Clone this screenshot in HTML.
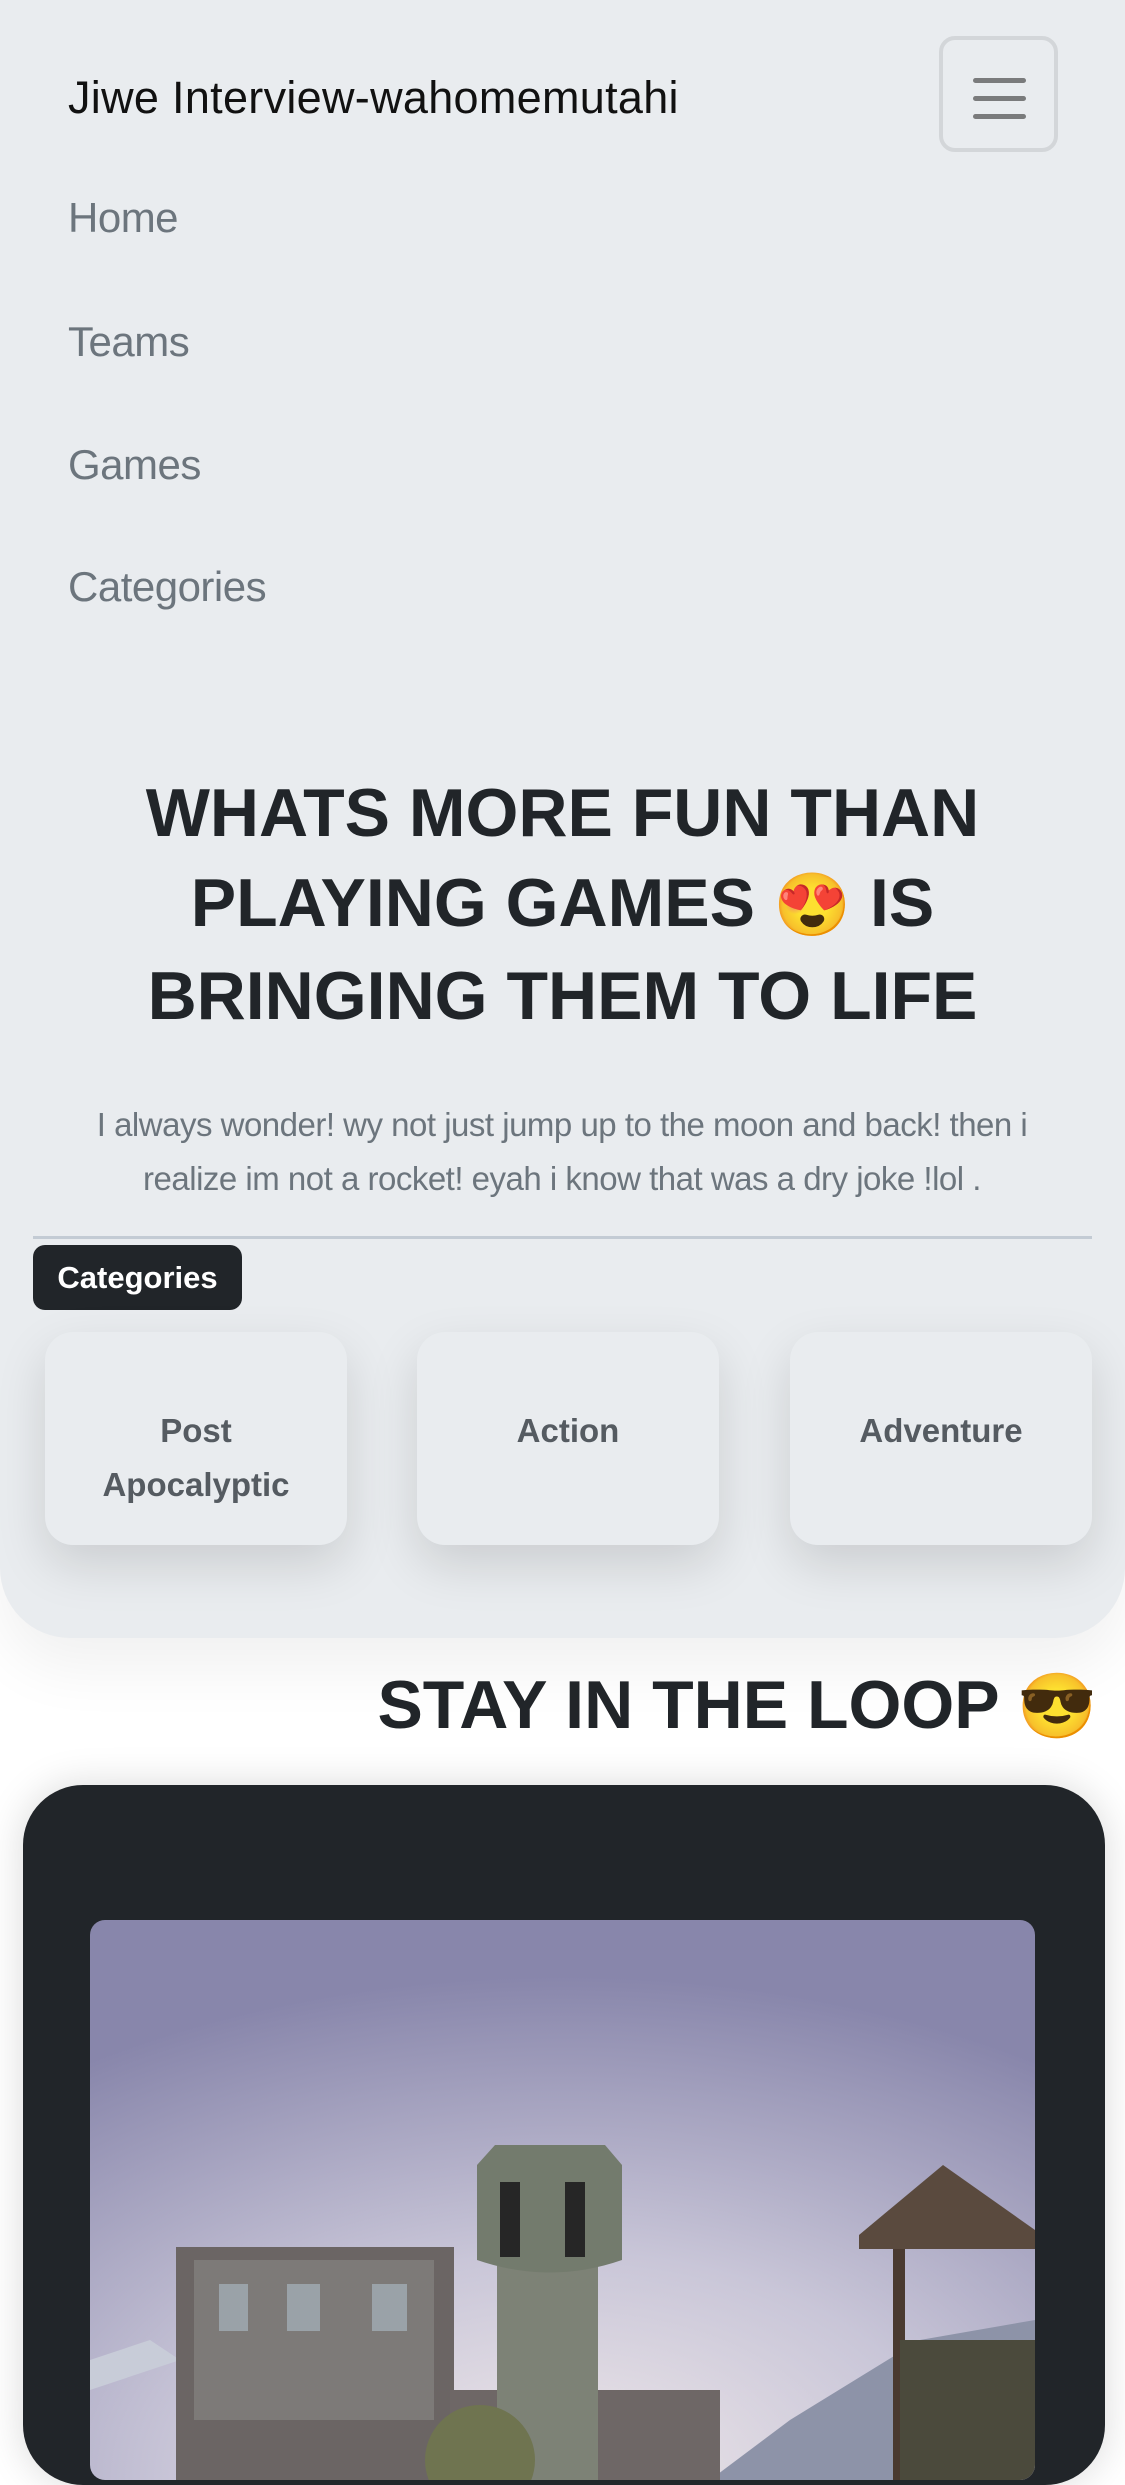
<!DOCTYPE html>
<html><head><meta charset="utf-8"><style>
*{margin:0;padding:0;box-sizing:border-box}
body{width:1125px;height:2436px;overflow:hidden;background:#fff;font-family:"Liberation Sans",sans-serif;position:relative}
.top{position:absolute;left:0;top:0;width:1125px;height:1638px;background:#e9ecef;border-radius:0 0 70px 70px;box-shadow:0 30px 60px rgba(0,0,0,0.06)}
.abs{position:absolute}
.brand{left:68px;top:72px;font-size:45px;color:#111;letter-spacing:0.3px}
.tog{left:939px;top:36px;width:119px;height:116px;border:4px solid #d3d6d9;border-radius:16px}
.tog i{position:absolute;left:30px;width:53px;height:5px;background:#7a7b7c;border-radius:3px}
.nav{left:68px;font-size:42px;color:#6c757d;font-weight:300;letter-spacing:-0.5px}
h1{position:absolute;left:0;width:1125px;top:768px;text-align:center;font-size:68px;line-height:90px;font-weight:700;color:#212529}
.p{left:62px;width:1000px;top:1098px;text-align:center;font-size:33px;line-height:54px;color:#6c757d;letter-spacing:-0.5px}
.hr{left:33px;top:1236px;width:1059px;height:3px;background:#c3cbd4}
.badge{left:33px;top:1245px;width:209px;height:65px;background:#212529;border-radius:12px;color:#fff;font-weight:700;font-size:31px;line-height:65px;text-align:center}
.card{top:1332px;width:302px;height:213px;background:#e9ecef;border-radius:28px;box-shadow:0 20px 50px rgba(0,0,0,0.13);text-align:center;font-weight:700;font-size:33px;line-height:54px;color:#555b61;padding-top:72px}
.stay{right:28px;top:1666px;font-size:68px;font-weight:700;color:#212529}
.dark{left:23px;top:1785px;width:1082px;height:700px;background:#212529;border-radius:60px;box-shadow:0 0 40px rgba(0,0,0,0.15)}
.img{left:90px;top:1920px;width:945px;height:560px;border-radius:15px;overflow:hidden}
</style></head><body>
<div class="top"></div>
<div class="abs brand">Jiwe Interview-wahomemutahi</div>
<div class="abs tog"><i style="top:38px"></i><i style="top:56px"></i><i style="top:74px"></i></div>
<div class="abs nav" style="top:194px">Home</div>
<div class="abs nav" style="top:318px">Teams</div>
<div class="abs nav" style="top:441px">Games</div>
<div class="abs nav" style="top:563px">Categories</div>
<h1>WHATS MORE FUN THAN<br>PLAYING GAMES <span style="font-family:'Noto Color Emoji','DejaVu Sans',sans-serif;font-size:62px">😍</span> IS<br>BRINGING THEM TO LIFE</h1>
<div class="abs p">I always wonder! wy not just jump up to the moon and back! then i realize im not a rocket! eyah i know that was a dry joke !lol .</div>
<div class="abs hr"></div>
<div class="abs badge">Categories</div>
<div class="abs card" style="left:45px">Post<br>Apocalyptic</div>
<div class="abs card" style="left:417px">Action</div>
<div class="abs card" style="left:790px">Adventure</div>
<div class="abs stay">STAY IN THE LOOP <span style="font-family:'Noto Color Emoji','DejaVu Sans',sans-serif;font-size:64px">😎</span></div>
<div class="abs dark"></div>
<div class="abs img">
<svg width="945" height="560" viewBox="0 0 945 560">
<defs>
<radialGradient id="sky" cx="0.5" cy="1" r="0.9">
<stop offset="0" stop-color="#efe8ea"/><stop offset="0.45" stop-color="#c9c6d8"/><stop offset="1" stop-color="#8886ab"/>
</radialGradient>
</defs>
<rect width="945" height="560" fill="url(#sky)"/>
<path d="M0 440 L60 420 L90 440 L0 470Z" fill="#c8ccd8"/>
<path d="M620 560 L700 500 L830 420 L945 400 L945 560Z" fill="#8d93a8"/>
<rect x="86" y="327" width="278" height="233" fill="#6b6564"/>
<rect x="104" y="340" width="240" height="160" fill="#7d7a78"/>
<rect x="129" y="364" width="29" height="47" fill="#9aa2a8"/><rect x="197" y="364" width="33" height="47" fill="#9aa2a8"/><rect x="282" y="364" width="35" height="47" fill="#9aa2a8"/>
<rect x="360" y="470" width="270" height="90" fill="#6e6766"/>
<rect x="407" y="346" width="101" height="214" fill="#7d8276"/>
<path d="M387 340 L387 245 L405 225 L515 225 L532 245 L532 340 Q460 365 387 340Z" fill="#737b6d"/>
<rect x="410" y="262" width="20" height="75" fill="#262626"/><rect x="475" y="262" width="20" height="75" fill="#262626"/>
<path d="M769 315 L853 245 L945 310 L945 329 L769 329Z" fill="#5a4a3e"/>
<rect x="803" y="329" width="12" height="231" fill="#4a3a30"/>
<rect x="810" y="420" width="135" height="140" fill="#4b4a3c"/>
<circle cx="390" cy="540" r="55" fill="#6f7450"/>
</svg>
</div>
</body></html>
